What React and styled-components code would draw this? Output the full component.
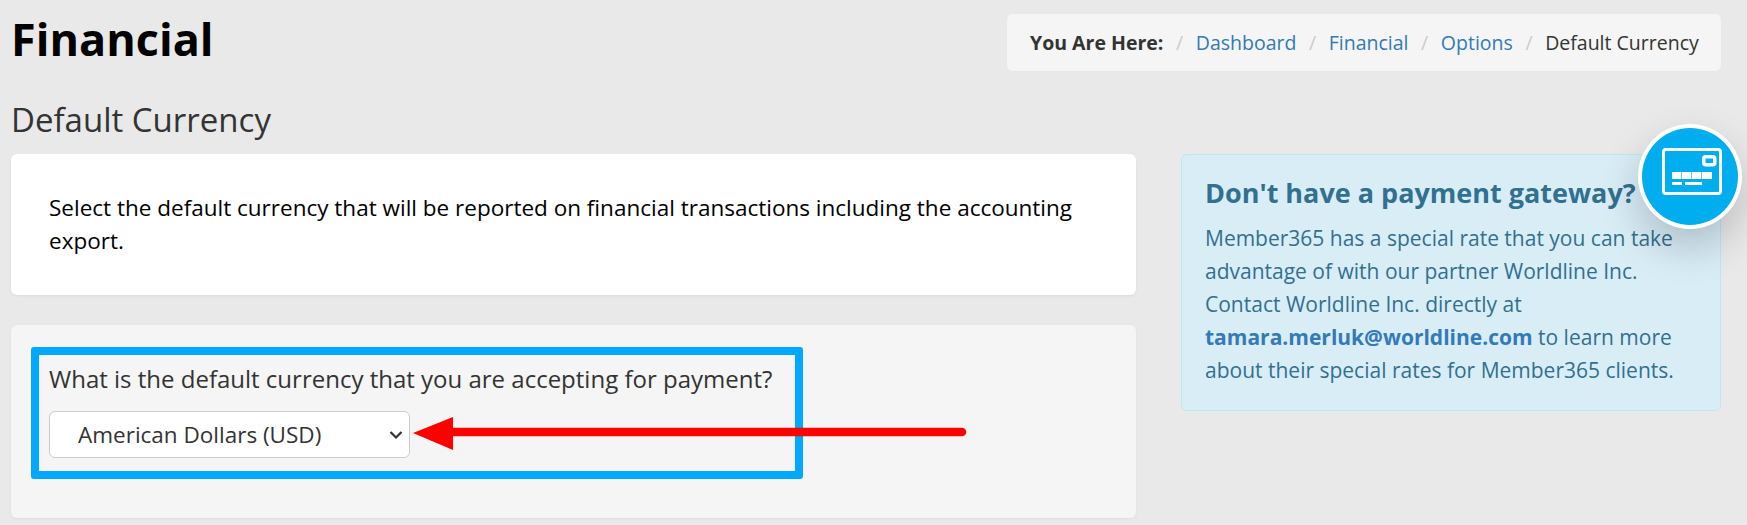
import React from "react";
import styled, { createGlobalStyle } from "styled-components";

const Global = createGlobalStyle`
  html, body { margin: 0; padding: 0; background: #e9e9e9; }
  body { font-family: "Open Sans", "Liberation Sans", sans-serif; color: #333; font-size: 20px; }
`;

const Page = styled.div`
  width: 1747px;
  height: 525px;
  box-sizing: border-box;
  padding: 0 26px 0 11px;
  overflow: hidden;
`;

const Header = styled.header`
  display: flex;
  justify-content: space-between;
  align-items: flex-start;
  height: 100px;
`;

const PageTitle = styled.h1`
  margin: 9px 0 0;
  font-size: 45px;
  line-height: 60px;
  font-weight: 700;
  color: #000;
`;

const Breadcrumb = styled.nav`
  margin-top: 14px;
  display: flex;
  align-items: center;
  height: 57px;
  box-sizing: border-box;
  width: 714px;
  padding: 0 22px 0 23px;
  background: #f5f5f5;
  border-radius: 6px;
  font-size: 19.5px;
  white-space: nowrap;
`;

const Lead = styled.strong`
  font-weight: 700;
  color: #333;
`;

const Sep = styled.span`
  color: #ccc;
  padding: 0 12.6px;
`;

const Crumb = styled.a`
  color: #337ab7;
  text-decoration: none;
`;

const Current = styled.span`
  color: #333;
`;

const SubTitle = styled.h2`
  margin: 0;
  font-size: 33px;
  line-height: 40px;
  font-weight: 400;
  color: #333;
  height: 54px;
`;

const Columns = styled.div`
  display: grid;
  grid-template-columns: 1125px 540px;
  column-gap: 45px;
  align-items: start;
`;

const Main = styled.main`
  display: flex;
  flex-direction: column;
  gap: 30px;
`;

const Card = styled.section`
  box-sizing: border-box;
  height: 141px;
  padding: 37px 38px 0;
  background: #fff;
  border-radius: 6px;
  box-shadow: 0 1px 3px rgba(0, 0, 0, 0.06);
  color: #000;
  font-size: 22.5px;
  line-height: 33px;
`;

const Panel = styled.section`
  box-sizing: border-box;
  height: 193px;
  padding: 22px 20px 0;
  background: #f5f5f5;
  border-radius: 6px;
  box-shadow: 0 1px 3px rgba(0, 0, 0, 0.05);
  position: relative;
`;

const Highlight = styled.div`
  box-sizing: border-box;
  width: 772px;
  height: 132px;
  padding: 7px 10px 0;
  border: 8px solid #00a8ff;
  border-radius: 3px;
`;

const Question = styled.label`
  display: block;
  font-size: 24px;
  line-height: 33px;
  color: #333;
  margin-bottom: 16px;
`;

const SelectWrap = styled.div`
  position: relative;
  width: 361px;
  height: 47px;
`;

const Select = styled.select`
  display: block;
  box-sizing: border-box;
  width: 100%;
  height: 100%;
  padding: 0 0 0 28px;
  appearance: none;
  background: #fff;
  border: 1px solid #ccc;
  border-radius: 6px;
  font-family: inherit;
  font-size: 22.5px;
  color: #333;
`;

const Chevron = styled.svg`
  position: absolute;
  right: 7px;
  top: 19px;
  width: 14px;
  height: 10px;
  pointer-events: none;
`;

const ArrowSvg = styled.svg`
  position: absolute;
  left: 398px;
  top: 87px;
  width: 570px;
  height: 40px;
`;

const Alert = styled.aside`
  position: relative;
  box-sizing: border-box;
  height: 257px;
  padding: 20px 23px 0 23px;
  background: #d9edf7;
  border: 1px solid #bce8f1;
  border-radius: 6px;
  color: #31708f;
  font-size: 21px;
  line-height: 33px;
`;

const AlertTitle = styled.h3`
  margin: 0 0 11px;
  font-size: 27px;
  line-height: 36px;
  font-weight: 700;
  color: #31708f;
`;

const AlertText = styled.p`
  margin: 0;
  white-space: nowrap;
`;

const Email = styled.a`
  color: #337ab7;
  font-weight: 700;
  text-decoration: none;
`;

const Badge = styled.div`
  position: absolute;
  left: 456px;
  top: -31px;
  width: 104px;
  height: 105px;
  box-sizing: border-box;
  display: flex;
  align-items: center;
  justify-content: center;
  background: #00aeef;
  border: 4px solid #fff;
  border-radius: 50%;
  box-shadow: 0 18px 40px rgba(0, 0, 0, 0.2);
`;

const CardIcon = styled.svg`
  width: 60px;
  height: 47px;
  margin: 0 0 10px 4px;
`;

export default function App() {
  return (
    <>
      <Global />
      <Page>
        <Header>
          <PageTitle>Financial</PageTitle>
          <Breadcrumb>
            <Lead>You Are Here:</Lead>
            <Sep>/</Sep>
            <Crumb href="#">Dashboard</Crumb>
            <Sep>/</Sep>
            <Crumb href="#">Financial</Crumb>
            <Sep>/</Sep>
            <Crumb href="#">Options</Crumb>
            <Sep>/</Sep>
            <Current>Default Currency</Current>
          </Breadcrumb>
        </Header>
        <SubTitle>Default Currency</SubTitle>
        <Columns>
          <Main>
            <Card>
              Select the default currency that will be reported on financial transactions including the accounting export.
            </Card>
            <Panel>
              <Highlight>
                <Question htmlFor="currency">What is the default currency that you are accepting for payment?</Question>
                <SelectWrap>
                  <Select id="currency" defaultValue="USD">
                    <option value="USD">American Dollars (USD)</option>
                    <option value="CAD">Canadian Dollars (CAD)</option>
                  </Select>
                  <Chevron viewBox="0 0 14 10" aria-hidden="true">
                    <path d="M1.5 2 L7 7.5 L12.5 2" fill="none" stroke="#333" strokeWidth="2.2" />
                  </Chevron>
                </SelectWrap>
              </Highlight>
              <ArrowSvg viewBox="0 0 570 40" aria-hidden="true">
                <polygon points="4,21 44,5 44,38" fill="#ff0000" />
                <path d="M44 20 H553" stroke="#ff0000" strokeWidth="8.5" strokeLinecap="round" />
              </ArrowSvg>
            </Panel>
          </Main>
          <Alert>
            <AlertTitle>Don't have a payment gateway?</AlertTitle>
            <AlertText>
              Member365 has a special rate that you can take
              <br />
              advantage of with our partner Worldline Inc.
              <br />
              Contact Worldline Inc. directly at
              <br />
              <Email href="#">tamara.merluk@worldline.com</Email> to learn more
              <br />
              about their special rates for Member365 clients.
            </AlertText>
            <Badge>
              <CardIcon viewBox="0 0 60 47" aria-hidden="true">
                <rect x="1.5" y="1.5" width="57" height="44" rx="2.5" fill="none" stroke="#fff" strokeWidth="3" />
                <rect x="41.75" y="8.75" width="11" height="8" rx="2" fill="none" stroke="#fff" strokeWidth="3.5" />
                <rect x="10" y="24" width="9.4" height="7" fill="#fff" />
                <rect x="20" y="24" width="9.4" height="7" fill="#fff" />
                <rect x="30" y="24" width="9.4" height="7" fill="#fff" />
                <rect x="40" y="24" width="10" height="7" fill="#fff" />
                <rect x="10" y="34" width="10" height="3" fill="#fff" />
                <rect x="23" y="34" width="17" height="3" fill="#fff" />
              </CardIcon>
            </Badge>
          </Alert>
        </Columns>
      </Page>
    </>
  );
}
